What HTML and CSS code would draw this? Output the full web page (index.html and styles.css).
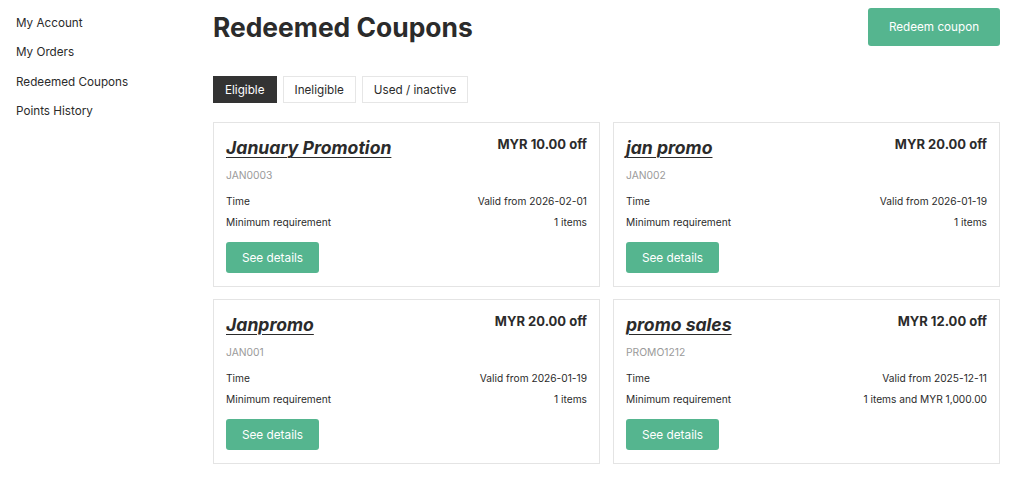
FILE: index.html
```html
<!DOCTYPE html>
<html>
<head>
<meta charset="utf-8">
<link rel="stylesheet" href="styles.css">
</head>
<body>
<div class="layout">
  <nav class="sidebar">
    <a class="nav-item">My Account</a>
    <a class="nav-item">My Orders</a>
    <a class="nav-item">Redeemed Coupons</a>
    <a class="nav-item">Points History</a>
  </nav>
  <main class="main">
    <div class="header">
      <h1 class="title">Redeemed Coupons</h1>
      <button class="btn btn-redeem">Redeem coupon</button>
    </div>
    <div class="tabs">
      <button class="tab active">Eligible</button>
      <button class="tab">Ineligible</button>
      <button class="tab">Used / inactive</button>
    </div>
    <div class="grid">
      <div class="card">
        <div class="card-top">
          <a class="coupon-name">January Promotion</a>
          <span class="amount">MYR 10.00 off</span>
        </div>
        <div class="code">JAN0003</div>
        <div class="row"><span>Time</span><span>Valid from 2026-02-01</span></div>
        <div class="row"><span>Minimum requirement</span><span>1 items</span></div>
        <button class="btn btn-details">See details</button>
      </div>
      <div class="card">
        <div class="card-top">
          <a class="coupon-name">jan promo</a>
          <span class="amount">MYR 20.00 off</span>
        </div>
        <div class="code">JAN002</div>
        <div class="row"><span>Time</span><span>Valid from 2026-01-19</span></div>
        <div class="row"><span>Minimum requirement</span><span>1 items</span></div>
        <button class="btn btn-details">See details</button>
      </div>
      <div class="card">
        <div class="card-top">
          <a class="coupon-name">Janpromo</a>
          <span class="amount">MYR 20.00 off</span>
        </div>
        <div class="code">JAN001</div>
        <div class="row"><span>Time</span><span>Valid from 2026-01-19</span></div>
        <div class="row"><span>Minimum requirement</span><span>1 items</span></div>
        <button class="btn btn-details">See details</button>
      </div>
      <div class="card">
        <div class="card-top">
          <a class="coupon-name">promo sales</a>
          <span class="amount">MYR 12.00 off</span>
        </div>
        <div class="code">PROMO1212</div>
        <div class="row"><span>Time</span><span>Valid from 2025-12-11</span></div>
        <div class="row"><span>Minimum requirement</span><span>1 items and MYR 1,000.00</span></div>
        <button class="btn btn-details">See details</button>
      </div>
    </div>
  </main>
</div>
</body>
</html>
```

FILE: styles.css
```css
* { box-sizing: border-box; }
html, body {
  margin: 0;
  background: #fff;
  font-family: Inter, "Noto Sans", sans-serif;
  color: #2b2b2b;
}
.layout {
  display: flex;
  padding: 8px 16px 0 16px;
}
.sidebar {
  width: 197px;
  flex: none;
  display: flex;
  flex-direction: column;
  padding-top: 1px;
}
.nav-item {
  font-size: 11.7px;
  line-height: 29.3px;
  color: #2b2b2b;
  text-decoration: none;
}
.main {
  flex: 1;
  min-width: 0;
}
.header {
  display: flex;
  justify-content: space-between;
  align-items: center;
  height: 38px;
}
.title {
  margin: 0;
  font-size: 26.4px;
  font-weight: 700;
  color: #2b2b2b;
}
.btn {
  font-family: inherit;
  border: none;
  background: #55b58f;
  color: #fff;
  border-radius: 3px;
  cursor: pointer;
}
.btn-redeem {
  width: 132px;
  height: 38px;
  font-size: 11.7px;
}
.tabs {
  display: flex;
  gap: 6px;
  margin-top: 30px;
}
.tab {
  font-family: inherit;
  font-size: 11.7px;
  height: 27px;
  padding: 0 11px;
  border: 1px solid #e6e6e6;
  background: #fff;
  color: #2b2b2b;
  border-radius: 0;
}
.tab.active {
  background: #333;
  border-color: #333;
  color: #fff;
}
.grid {
  display: grid;
  grid-template-columns: 1fr 1fr;
  gap: 12px 13px;
  margin-top: 19px;
}
.card {
  border: 1px solid #e4e4e4;
  padding: 12px 12px 13px 12px;
}
.card-top {
  display: flex;
  justify-content: space-between;
  align-items: flex-start;
  height: 24px;
}
.coupon-name {
  font-size: 17.6px;
  line-height: 25px;
  font-weight: 700;
  font-style: italic;
  text-decoration: underline;
  text-underline-offset: 3px;
  text-decoration-thickness: 1px;
  color: #2b2b2b;
}
.amount {
  font-size: 13px;
  font-weight: 700;
  line-height: 18px;
  color: #2b2b2b;
}
.code {
  margin-top: 9px;
  font-size: 10.3px;
  line-height: 14px;
  color: #9a9a9a;
}
.row {
  display: flex;
  justify-content: space-between;
  font-size: 10.2px;
  line-height: 21px;
  color: #2b2b2b;
}
.code + .row { margin-top: 9px; }
.btn-details {
  margin-top: 9px;
  width: 93px;
  height: 31px;
  font-size: 11.8px;
}
```
